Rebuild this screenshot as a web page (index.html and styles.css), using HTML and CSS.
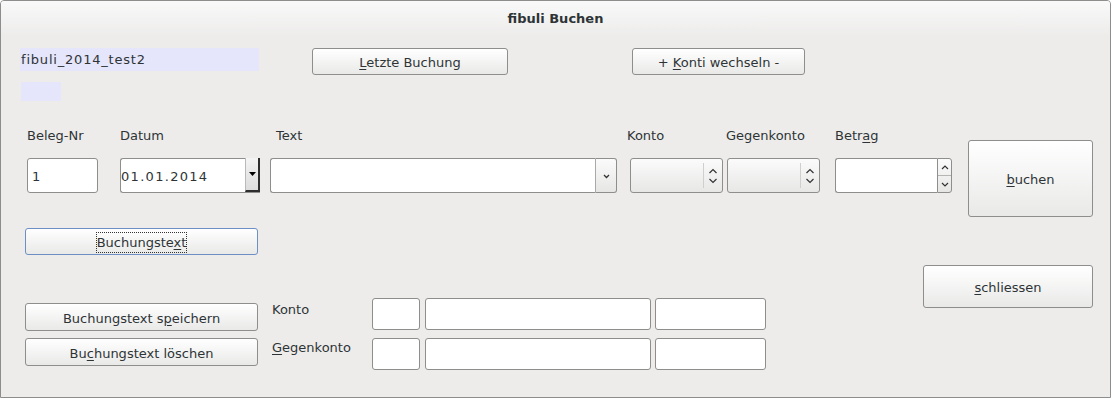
FILE: index.html
```html
<!DOCTYPE html>
<html lang="de">

<head>
  <meta charset="UTF-8">
  <meta name="viewport" content="width=device-width, initial-scale=1.0">
  <title>fibuli Buchen</title>
  <link rel="stylesheet" href="styles.css">
</head>

<body>
  <div class="window">
    <div class="titlebar">fibuli Buchen</div>

    <div class="top-row">
      <div class="file-label">fibuli_2014_test2</div>
      <button class="btn btn-last"><span><u>L</u>etzte Buchung</span></button>
      <button class="btn btn-konti"><span>+ <u>K</u>onti wechseln -</span></button>
    </div>
    <div class="small-box"></div>

    <div class="main">
      <div class="left">
        <!-- Kopfzeile mit Beschriftungen und Eingaben -->
        <div class="entry-grid">
          <span class="lbl">Beleg-Nr</span>
          <span class="lbl">Datum</span>
          <span class="lbl lbl-text">Text</span>
          <span class="lbl lbl-konto">Konto</span>
          <span class="lbl lbl-gegen">Gegenkonto</span>
          <span class="lbl">Betr<u>a</u>g</span>

          <div class="entry beleg">1</div>

          <div class="combo-date">
            <span class="combo-date-value">01.01.2014</span>
            <span class="combo-date-btn">
              <svg width="7" height="4" viewBox="0 0 7 4"><path d="M0 0h7L3.5 4z" fill="#000"/></svg>
            </span>
          </div>

          <div class="combo-text">
            <span class="combo-text-entry"></span>
            <span class="combo-text-btn">
              <svg width="7" height="5" viewBox="0 0 7 5"><path d="M1 1l2.5 2.5L6 1" fill="none" stroke="#333" stroke-width="1.3"/></svg>
            </span>
          </div>

          <div class="spin">
            <span class="spin-field"></span>
            <span class="spin-arrows">
              <svg width="10" height="18" viewBox="0 0 10 18"><path d="M1.5 6L5 2.5 8.5 6M1.5 12L5 15.5 8.5 12" fill="none" stroke="#333" stroke-width="1.2"/></svg>
            </span>
          </div>

          <div class="spin">
            <span class="spin-field"></span>
            <span class="spin-arrows">
              <svg width="10" height="18" viewBox="0 0 10 18"><path d="M1.5 6L5 2.5 8.5 6M1.5 12L5 15.5 8.5 12" fill="none" stroke="#333" stroke-width="1.2"/></svg>
            </span>
          </div>

          <div class="amount">
            <span class="amount-entry"></span>
            <span class="amount-btns">
              <span class="amount-up">
                <svg width="8" height="5" viewBox="0 0 8 5"><path d="M1 4l3-3 3 3" fill="none" stroke="#333" stroke-width="1.2"/></svg>
              </span>
              <span class="amount-down">
                <svg width="8" height="5" viewBox="0 0 8 5"><path d="M1 1l3 3 3-3" fill="none" stroke="#333" stroke-width="1.2"/></svg>
              </span>
            </span>
          </div>
        </div>

        <button class="btn btn-focus"><span class="focus-text">Buchungste<u>x</u>t</span></button>

        <!-- untere Zeilen mit Konto und Gegenkonto -->
        <div class="bottom-grid">
          <button class="btn btn-save"><span>Buchungstext s<u>p</u>eichern</span></button>
          <span class="lbl lbl-row1">Konto</span>
          <div class="entry"></div>
          <div class="entry acc-name"></div>
          <div class="entry acc-extra"></div>

          <button class="btn btn-delete"><span>Bu<u>c</u>hungstext löschen</span></button>
          <span class="lbl lbl-row2"><u>G</u>egenkonto</span>
          <div class="entry"></div>
          <div class="entry acc-name"></div>
          <div class="entry acc-extra"></div>
        </div>
      </div>

      <div class="right">
        <button class="btn btn-book"><span><u>b</u>uchen</span></button>
        <button class="btn btn-close"><span><u>s</u>chliessen</span></button>
      </div>
    </div>
  </div>
</body>

</html>
```

FILE: styles.css
```css
body {
  margin: 0;
  font-family: "DejaVu Sans", sans-serif;
  font-size: 13px;
  color: #2e3436;
  background-color: #ffffff;
}

.window {
  width: 1111px;
  height: 398px;
  box-sizing: border-box;
  border: 1px solid #8d8d8b;
  border-radius: 4px 4px 0 0;
  background-color: #edeceb;
  overflow: hidden;
}

.titlebar {
  height: 35px;
  line-height: 35px;
  text-align: center;
  font-weight: bold;
  color: #2e3436;
  background: linear-gradient(#f9f9f9, #edeceb);
}

u {
  text-underline-offset: 2px;
}

/* botones */
.btn {
  font-family: inherit;
  font-size: 13px;
  color: #2e3436;
  border: 1px solid #8e8e8c;
  border-radius: 3px;
  background: linear-gradient(#ffffff, #e9e9e8);
  padding: 2px 0 0 0;
  box-sizing: border-box;
  display: flex;
  align-items: center;
  justify-content: center;
  white-space: nowrap;
}

.top-row {
  display: flex;
  align-items: flex-start;
  margin-top: 12px;
}

.file-label {
  margin-left: 19px;
  width: 239px;
  height: 23px;
  line-height: 24px;
  padding-left: 1px;
  box-sizing: border-box;
  background-color: #e5e5fb;
  letter-spacing: 0.8px;
}

.btn-last {
  margin-left: 53px;
  width: 196px;
  height: 27px;
}

.btn-konti {
  margin-left: 124px;
  width: 173px;
  height: 27px;
}

.small-box {
  margin: 7px 0 0 20px;
  width: 40px;
  height: 19px;
  background-color: #e5e5fb;
}

.main {
  display: flex;
  justify-content: space-between;
}

.left {
  flex: 1;
  min-width: 0;
  display: flex;
  flex-direction: column;
  align-items: flex-start;
}

.right {
  flex: none;
  display: flex;
  flex-direction: column;
  align-items: flex-end;
  padding-right: 17px;
}

.lbl {
  line-height: 16px;
  white-space: nowrap;
}

.entry-grid {
  display: grid;
  grid-template-columns: 93px 150px 360px 97px 108px 117px;
  grid-template-rows: 16px 35px;
  row-gap: 15px;
  margin: 27px 0 0 26px;
  align-items: start;
}

.entry-grid > div {
  margin-top: -1px;
}

.lbl-text {
  padding-left: 6px;
}

.lbl-konto {
  margin-left: -3px;
}

.lbl-gegen {
  margin-left: -1px;
}

.entry {
  background-color: #fff;
  border: 1px solid #8e8e8c;
  border-radius: 3px;
  box-sizing: border-box;
}

.beleg {
  width: 71px;
  height: 35px;
  line-height: 36px;
  padding-left: 4px;
}

.combo-date {
  width: 140px;
  height: 35px;
  box-sizing: border-box;
  display: flex;
  background-color: #fff;
  border: 1px solid #8e8e8c;
  border-right: none;
  border-radius: 3px 0 0 3px;
}

.combo-date-value {
  flex: 1;
  line-height: 36px;
  letter-spacing: 1.3px;
}

.combo-date-btn {
  width: 15px;
  display: flex;
  align-items: center;
  justify-content: center;
  box-sizing: border-box;
  border-left: 1px solid #b9b9b7;
  border-right: 2px solid #2e2e2e;
  border-bottom: 2px solid #2e2e2e;
  margin-top: -1px;
  background: linear-gradient(#f4f4f4, #dcdcdc);
}

.combo-text {
  width: 347px;
  height: 35px;
  display: flex;
}

.combo-text-entry {
  flex: 1;
  background-color: #fff;
  border: 1px solid #8e8e8c;
  border-right: 1px solid #a9a9a7;
  border-radius: 3px 0 0 3px;
}

.combo-text-btn {
  width: 21px;
  display: flex;
  align-items: center;
  justify-content: center;
  padding-top: 2px;
  box-sizing: border-box;
  border: 1px solid #8e8e8c;
  border-left: none;
  border-radius: 0 3px 3px 0;
  background: linear-gradient(#fbfbfb, #e6e6e5);
}

.spin {
  width: 93px;
  height: 35px;
  box-sizing: border-box;
  display: flex;
  border: 1px solid #8e8e8c;
  border-radius: 3px;
  background: linear-gradient(#fbfbfb, #e7e7e6);
}

.spin-field {
  width: 72px;
  margin: 4px 0;
  border-right: 1px solid #cfcfce;
}

.spin-arrows {
  flex: 1;
  display: flex;
  align-items: center;
  justify-content: center;
}

.amount {
  width: 117px;
  height: 35px;
  display: flex;
}

.amount-entry {
  width: 102px;
  background-color: #fff;
  border: 1px solid #8e8e8c;
  border-right: none;
  border-radius: 3px 0 0 3px;
  box-sizing: border-box;
}

.amount-btns {
  flex: 1;
  display: flex;
  flex-direction: column;
  border: 1px solid #8e8e8c;
  border-radius: 0 3px 3px 0;
  background: linear-gradient(#fbfbfb, #e6e6e5);
}

.amount-up,
.amount-down {
  flex: 1;
  display: flex;
  align-items: center;
  justify-content: center;
}

.amount-up {
  border-bottom: 1px solid #b5b5b3;
}

.btn.btn-focus {
  margin: 34px 0 0 24px;
  width: 233px;
  height: 27px;
  border-color: #6e8fc6;
}

.focus-text {
  outline: 1px dotted #333;
  padding: 1px 0;
  line-height: 17px;
}

.bottom-grid {
  display: grid;
  grid-template-columns: 247px 100px 48px 231px 115px;
  grid-template-rows: 32px 32px;
  row-gap: 8px;
  margin: 43px 0 0 24px;
  align-items: start;
}

.bottom-grid .entry {
  height: 32px;
}

.acc-name {
  margin-left: 5px;
}

.acc-extra {
  margin-left: 4px;
}

.btn-save,
.btn-delete {
  width: 233px;
  height: 28px;
}

.btn-save {
  margin-top: 5px;
}

.lbl-row1 {
  margin-top: 4px;
}

.lbl-row2 {
  margin-top: 2px;
}

.btn-book {
  margin-top: 39px;
  width: 125px;
  height: 77px;
}

.btn-close {
  margin-top: 48px;
  width: 170px;
  height: 43px;
}
```
